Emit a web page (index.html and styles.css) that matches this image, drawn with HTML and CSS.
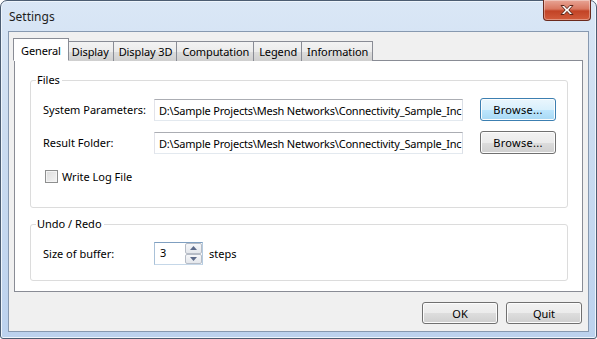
FILE: index.html
```html
<!DOCTYPE html>
<html lang="en">
  <head>
    <meta charset="UTF-8" />
    <title>Settings</title>
    <link rel="stylesheet" href="styles.css">
  </head>
  <body>
    <div class="window">
      <div class="titlebar">
        <span class="title">Settings</span>
        <div class="close">
          <svg width="18" height="12" viewBox="0 0 18 12">
            <path d="M3 1.5h3.2L9 4.6l2.8-3.1H15L10.8 6 15 10.5h-3.2L9 7.4l-2.8 3.1H3L7.2 6z" fill="#fff" stroke="#5a2418" stroke-width="1"/>
          </svg>
        </div>
      </div>

      <div class="client">
        <ul class="tabs">
          <li class="tab active">General</li>
          <li class="tab">Display</li>
          <li class="tab">Display 3D</li>
          <li class="tab">Computation</li>
          <li class="tab">Legend</li>
          <li class="tab">Information</li>
        </ul>

        <div class="panel">
          <fieldset class="group files">
            <legend>Files</legend>
            <div class="row">
              <label class="label">System Parameters:</label>
              <div class="field">D:\Sample Projects\Mesh Networks\Connectivity_Sample_Inc</div>
              <button class="btn browse hot">Browse...</button>
            </div>
            <div class="row">
              <label class="label">Result Folder:</label>
              <div class="field">D:\Sample Projects\Mesh Networks\Connectivity_Sample_Inc</div>
              <button class="btn browse">Browse...</button>
            </div>
            <div class="row check-row">
              <span class="checkbox"></span>
              <span>Write Log File</span>
            </div>
          </fieldset>

          <fieldset class="group undo">
            <legend>Undo / Redo</legend>
            <div class="row">
              <label class="label">Size of buffer:</label>
              <div class="spin">
                <div class="spin-value">3</div>
                <div class="spin-buttons">
                  <span class="spin-btn"><svg width="7" height="4" viewBox="0 0 7 4"><path d="M0 4L3.5 0 7 4z" fill="#5d6b8a"/></svg></span>
                  <span class="spin-btn"><svg width="7" height="4" viewBox="0 0 7 4"><path d="M0 0h7L3.5 4z" fill="#5d6b8a"/></svg></span>
                </div>
              </div>
              <span class="unit">steps</span>
            </div>
          </fieldset>
        </div>

        <div class="actions">
          <button class="btn">OK</button>
          <button class="btn">Quit</button>
        </div>
      </div>
    </div>
  </body>
</html>
```

FILE: styles.css
```css
html,
body {
  margin: 0;
  padding: 0;
  background: #fff;
}

body {
  font-family: "Noto Sans", "Open Sans", sans-serif;
  font-size: 11px;
  color: #000;
}

.window {
  width: 597px;
  height: 339px;
  box-sizing: border-box;
  border: 1px solid #4c5d72;
  border-radius: 7px 7px 3px 3px;
  padding: 0 7px 6px 7px;
  display: flex;
  flex-direction: column;
  background: linear-gradient(to bottom, #dae7f6 0%, #cbdcf0 40%, #bcd2ee 100%);
  box-shadow: inset 0 0 0 1px #eef5fc;
}

.titlebar {
  height: 30px;
  display: flex;
  align-items: flex-start;
}

.title {
  font-size: 12px;
  margin: 7px 0 0 1px;
  color: #1e1e1e;
}

.close {
  margin-left: auto;
  margin-right: -2px;
  margin-top: -1px;
  width: 48px;
  height: 21px;
  box-sizing: border-box;
  border: 1px solid #6b2a1d;
  border-top: none;
  border-radius: 0 0 4px 4px;
  background: linear-gradient(to bottom, #e8a596 0%, #d97760 45%, #c24326 55%, #d25c3c 100%);
  box-shadow: inset 0 0 0 1px rgba(255, 255, 255, 0.35);
  display: flex;
  align-items: center;
  justify-content: center;
}

.client {
  flex: 1;
  display: flex;
  flex-direction: column;
  background: #f0f0f0;
  border: 1px solid #8799b0;
  padding: 6px 5px 7px 5px;
}

.tabs {
  display: flex;
  align-items: flex-end;
  list-style: none;
  margin: 0 0 -1px 0;
  padding: 0 0 0 2px;
  height: 23px;
  position: relative;
  z-index: 1;
}

.tab {
  height: 20px;
  box-sizing: border-box;
  padding: 2px 4px 0 5px;
  border: 1px solid #898c95;
  border-bottom: none;
  margin-left: -1px;
  background: linear-gradient(to bottom, #f3f3f3 0%, #ebebeb 50%, #dddddd 51%, #cfcfcf 100%);
  white-space: nowrap;
  letter-spacing: -0.1px;
}

.tab.active {
  height: 23px;
  margin: 0 -2px 0 -3px;
  padding: 4px 7px 0 7px;
  background: #fff;
  border-bottom: 1px solid #fff;
  position: relative;
  z-index: 2;
}

.panel {
  flex: 1;
  background: #fff;
  border: 1px solid #898c95;
  padding: 11px 14px 0 15px;
}

.group {
  margin: 0;
  padding: 0 0 0 6px;
  border: 1px solid #dcdcdc;
  border-radius: 3px;
}

.group legend {
  padding: 0 2px 0 1px;
  margin-left: -1px;
  line-height: 16px;
}

.row {
  display: flex;
  align-items: center;
  height: 23px;
  margin-left: 6px;
}

.files .row {
  margin-top: 10px;
}

.files .check-row {
  height: 20px;
  margin-top: 12px;
  margin-bottom: 21px;
  margin-left: 8px;
}

.label {
  width: 111px;
  flex: none;
}

.field {
  width: 309px;
  height: 22px;
  box-sizing: border-box;
  border: 1px solid;
  border-color: #abadb3 #dbdfe6 #e3e9ef #e2e3ea;
  padding: 3px 0 0 4px;
  white-space: nowrap;
  overflow: hidden;
  flex: none;
  letter-spacing: -0.2px;
}

.btn {
  font: inherit;
  color: #000;
  width: 76px;
  height: 22px;
  box-sizing: border-box;
  border: 1px solid #707070;
  border-radius: 3px;
  background: linear-gradient(to bottom, #f2f2f2 0%, #ebebeb 50%, #dddddd 51%, #cfcfcf 100%);
  box-shadow: inset 0 0 0 1px #fcfcfc;
  padding: 0;
}

.browse {
  margin-left: 17px;
  height: 23px;
  letter-spacing: 0.3px;
}

.btn.hot {
  border-color: #3c7fb1;
  background: linear-gradient(to bottom, #eaf6fd 0%, #d9f0fc 50%, #bee6fd 51%, #a7d9f5 100%);
}

.checkbox {
  width: 13px;
  height: 13px;
  box-sizing: border-box;
  border: 1px solid #8e8f8f;
  background: linear-gradient(135deg, #dcdcdc 0%, #f4f4f4 100%);
  box-shadow: inset 0 0 0 1px #f4f4f4;
  margin-right: 4px;
}

.undo {
  margin-top: 8px;
}

.undo .row {
  margin-top: 10px;
  margin-bottom: 15px;
}

.spin {
  display: flex;
  height: 23px;
  box-sizing: border-box;
  border: 1px solid;
  border-color: #7f9fc0 #b5cbe0 #c5d7e8 #a9c1d8;
}

.spin-value {
  width: 30px;
  padding: 2px 0 0 5px;
  box-sizing: border-box;
}

.spin-buttons {
  width: 17px;
  display: flex;
  flex-direction: column;
}

.spin-btn {
  flex: 1;
  border: 1px solid #b6bcc6;
  border-radius: 2px;
  background: linear-gradient(to bottom, #f6f7f9 0%, #e4e7ec 100%);
  display: flex;
  align-items: center;
  justify-content: center;
}

.unit {
  margin-left: 6px;
}

.actions {
  display: flex;
  justify-content: flex-end;
  gap: 8px;
  margin-top: 10px;
  padding-right: 1px;
}
```
